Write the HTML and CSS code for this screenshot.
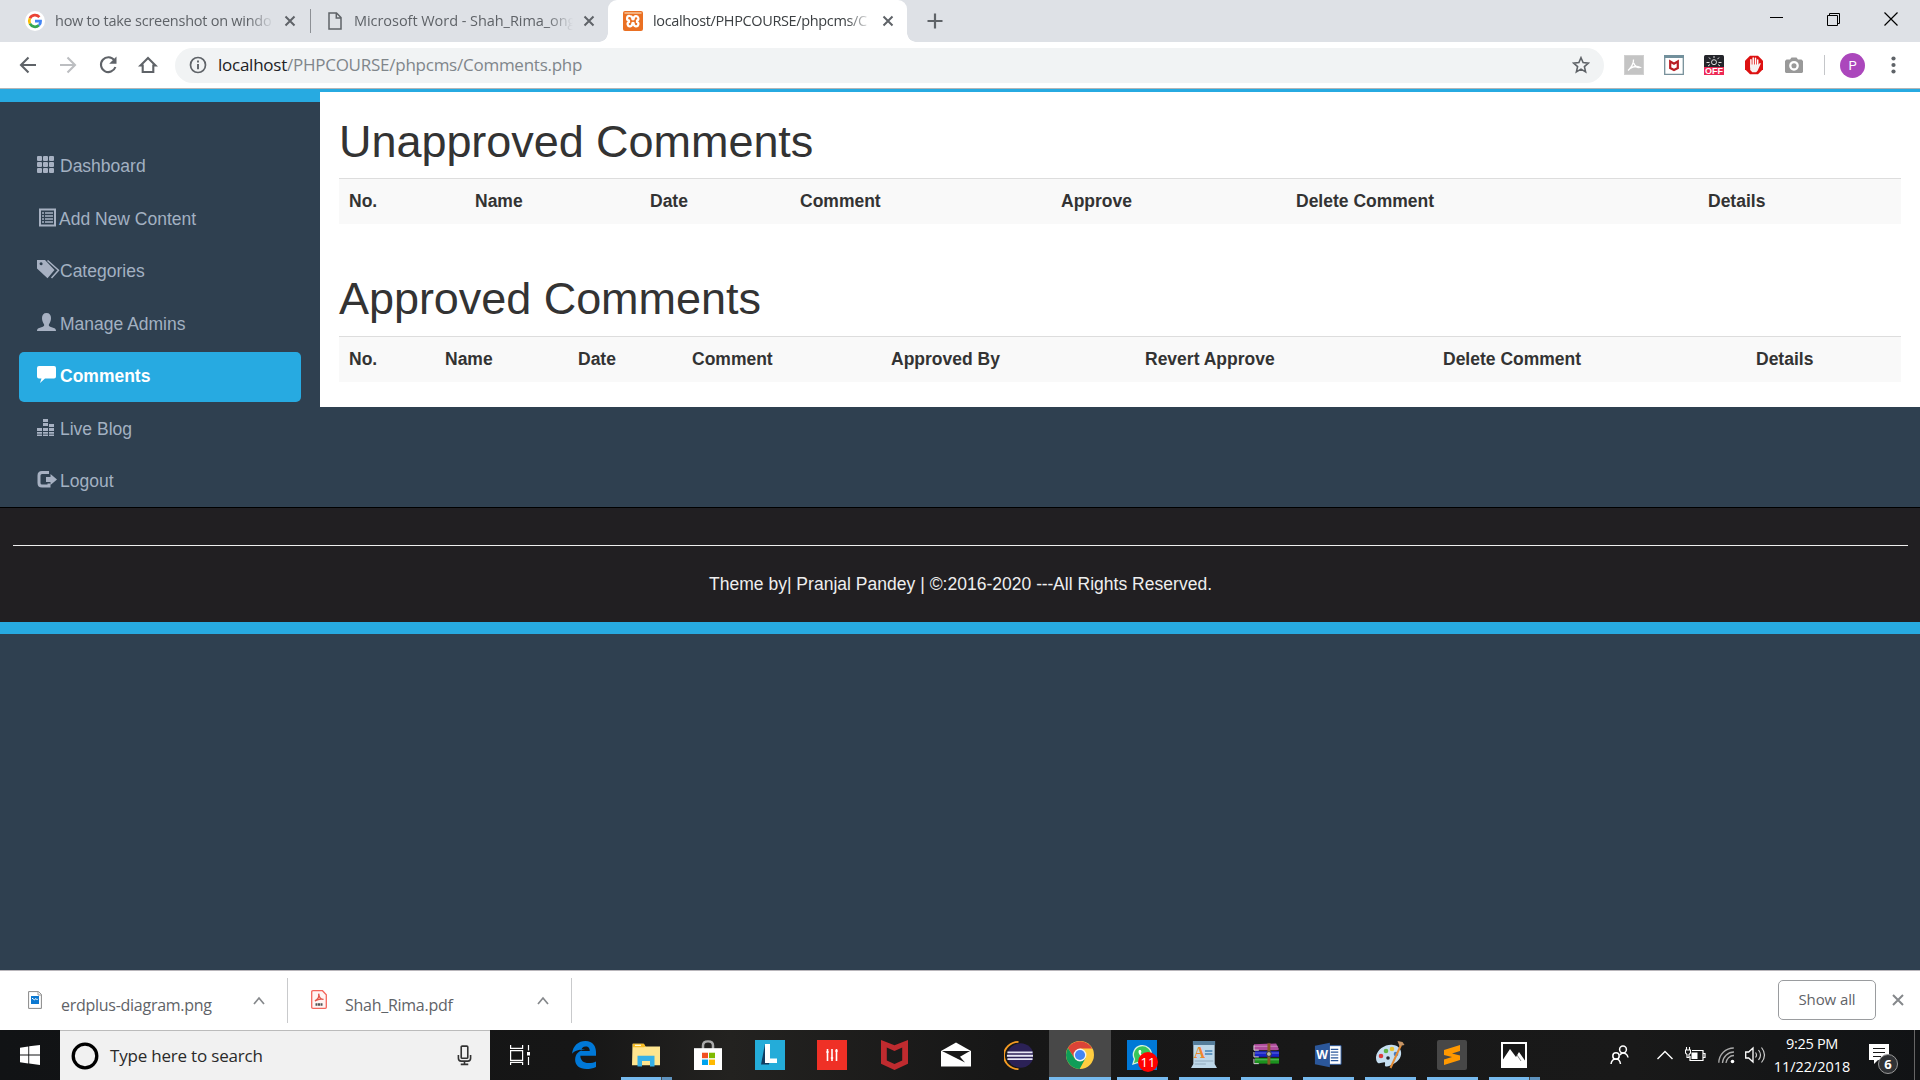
FILE: index.html
```html
<!DOCTYPE html>
<html lang="en">
<head>
<meta charset="utf-8">
<title>Comments</title>
<link rel="stylesheet" href="styles.css">
</head>
<body>
<div class="screen">
  <header class="tabstrip">
    <div class="tab tab-first">
      <svg class="favicon" width="20" height="20" viewBox="0 0 20 20"><circle cx="10" cy="10" r="10" fill="#fff"/><g fill="none" stroke-width="2.7"><path d="M14.4 6.1A5.8 5.8 0 0 0 4.9 7.3" stroke="#ea4335"/><path d="M4.9 7.3a5.8 5.8 0 0 0 0 5.4" stroke="#fbbc05"/><path d="M4.9 12.7a5.8 5.8 0 0 0 9 1.6" stroke="#34a853"/><path d="M13.9 14.3c1.3-1.1 1.8-2.6 1.7-4.1H10" stroke="#4285f4"/></g></svg>
      <span class="tab-title t1">how to take screenshot on windo</span>
      <svg class="tab-close" width="12" height="12" viewBox="0 0 12 12"><path d="M1.5 1.5l9 9m0-9l-9 9" stroke="#5f6368" stroke-width="2"/></svg>
    </div>
    <div class="tab tab-second">
      <svg class="favicon" width="14" height="18" viewBox="0 0 14 18"><path d="M1 1h7.500L13 5.500V17H1zM8.300 1v5H13" fill="none" stroke="#5f6368" stroke-width="1.500"/></svg>
      <span class="tab-title t2">Microsoft Word - Shah_Rima_ong</span>
      <svg class="tab-close" width="12" height="12" viewBox="0 0 12 12"><path d="M1.5 1.5l9 9m0-9l-9 9" stroke="#5f6368" stroke-width="2"/></svg>
    </div>
    <div class="tab tab-active">
      <svg class="favicon" width="20" height="20" viewBox="0 0 20 20"><rect width="20" height="20" rx="2" fill="#ea7023"/><rect x="1.500" y="1" width="17" height="2" fill="#f5b07c"/><path d="M6.800 5a2.300 2.300 0 0 1 2.400 2.300c0 1 .5 1.200.8 1.200s.8-.2.8-1.200A2.300 2.300 0 1 1 14 9.600v1.300a2.300 2.300 0 1 1-3.200 2.100c0-1-.5-1.200-.8-1.200s-.8.2-.8 1.200A2.300 2.300 0 1 1 6 10.900V9.600A2.300 2.300 0 0 1 6.800 5z" fill="none" stroke="#fff" stroke-width="2.200"/></svg>
      <span class="tab-title t3">localhost/PHPCOURSE/phpcms/C</span>
      <svg class="tab-close" width="12" height="12" viewBox="0 0 12 12"><path d="M1.5 1.5l9 9m0-9l-9 9" stroke="#5f6368" stroke-width="2"/></svg>
    </div>
    <svg class="new-tab" width="16" height="16" viewBox="0 0 16 16"><path d="M8 .5v15M.5 8h15" stroke="#5f6368" stroke-width="2.200"/></svg>
    <div class="window-buttons">
      <svg width="14" height="14" viewBox="0 0 14 14"><path d="M0 5.500h13" stroke="#000"/></svg>
      <svg width="14" height="14" viewBox="0 0 14 14"><path d="M.5 3.500h10v10H.5zM2.500 3.500v-2h10v10h-2" fill="none" stroke="#000"/></svg>
      <svg width="14" height="14" viewBox="0 0 14 14"><path d="M.5.5l13 13m0-13l-13 13" stroke="#000" stroke-width="1.200"/></svg>
    </div>
  </header>

  <div class="toolbar">
    <div class="nav-buttons">
      <svg width="20" height="20" viewBox="0 0 20 20"><path d="M18 10H3M10.500 2.500L3 10l7.500 7.500" fill="none" stroke="#5f6368" stroke-width="2.100"/></svg>
      <svg width="20" height="20" viewBox="0 0 20 20"><path d="M2 10h15M9.500 2.500L17 10l-7.500 7.500" fill="none" stroke="#bcbec1" stroke-width="2.100"/></svg>
      <svg width="20" height="20" viewBox="0 0 20 20"><path d="M16.300 5.200A7.400 7.400 0 1 0 17.400 12" fill="none" stroke="#5f6368" stroke-width="2.100"/><path d="M18.500 1.500v7.300h-7.300z" fill="#5f6368"/></svg>
      <svg width="20" height="20" viewBox="0 0 20 20"><path d="M2.500 10.500L10 3l7.500 7.500h-2.200V17H4.700v-6.500z" fill="none" stroke="#5f6368" stroke-width="2.100"/></svg>
    </div>
    <div class="omnibox">
      <svg class="info" width="18" height="18" viewBox="0 0 18 18"><circle cx="9" cy="9" r="7.500" fill="none" stroke="#5f6368" stroke-width="1.700"/><path d="M9 4.500v2M9 8v5.200" stroke="#5f6368" stroke-width="1.900"/></svg>
      <span class="url"><b>localhost</b>/PHPCOURSE/phpcms/Comments.php</span>
      <svg class="star" width="18" height="18" viewBox="0 0 18 18"><path d="M9 1.700l2.100 4.900 5.300.5-4 3.500 1.200 5.300L9 13.100l-4.600 2.800 1.200-5.300-4-3.500 5.300-.5z" fill="none" stroke="#5f6368" stroke-width="1.600"/></svg>
    </div>
    <div class="extensions">
      <svg width="20" height="20" viewBox="0 0 20 20"><path d="M0 0h20v20H0z" fill="#d0d0d0"/><path d="M1 1h18v18H1z" fill="#c4c4c4"/><path d="M4 15.500C7 13 10 8 9.500 4.500M9.700 8c1.300 3.500 3.400 5 6.300 4.400-3-1.500-7.500-.5-10.500 1.200" fill="none" stroke="#fff" stroke-width="1.300"/></svg>
      <svg width="20" height="20" viewBox="0 0 20 20"><path d="M.7.7h18.600v18.600H.7z" fill="#fff" stroke="#77909a" stroke-width="1.300"/><path d="M0 0h20v3H0z" fill="#72909c"/><path d="M6.200 6.500v6.500l3.800 2 3.800-2V6.500L10 8.700z" fill="none" stroke="#b91d24" stroke-width="2.200"/></svg>
      <svg width="20" height="20" viewBox="0 0 20 20"><rect width="20" height="20" rx="1.500" fill="#24252b"/><path d="M0 12h20v8H0z" fill="#ed2855"/><circle cx="10" cy="7.200" r="2.500" fill="none" stroke="#ddd"/><path d="M10 1v2M5 2.500l1.500 1.700M15 2.500l-1.500 1.700M2.500 7.500h3M14.500 7.500h3M4 11l2-1.500M16 11l-2-1.500" stroke="#ddd"/><text x="10" y="19" text-anchor="middle" class="off">OFF</text></svg>
      <svg width="20" height="20" viewBox="0 0 20 20"><path d="M6 .7h8l5 5v8.600l-5 5H6l-5-5V5.700z" fill="#dd1111"/><path d="M6.900 12V4.700M9.200 10V3M11.500 10V3.300M13.700 12V5" stroke="#fff" stroke-width="1.500" stroke-linecap="round"/><path d="M6.200 9.500h8.200l1.500-1.500c.8 0 1 .6.600 1.300l-2.900 6.500-1.500 1.500H8.300l-2.100-2.300z" fill="#f7f1f1"/></svg>
      <svg width="20" height="20" viewBox="0 0 20 20"><path d="M2.500 4.500H6l1.500-2h5l1.500 2h3.500L19 6v11l-1 1H2l-1-1V6z" fill="#999"/><circle cx="10" cy="10.800" r="3.700" fill="none" stroke="#fff" stroke-width="2.300"/></svg>
    </div>
    <span class="divider"></span>
    <span class="avatar">P</span>
    <svg class="kebab" width="5" height="18" viewBox="0 0 5 18"><g fill="#5f6368"><circle cx="2.500" cy="2.500" r="2.100"/><circle cx="2.500" cy="9" r="2.100"/><circle cx="2.500" cy="15.500" r="2.100"/></g></svg>
  </div>

  <div class="page">
    <div class="columns">
      <nav class="sidebar">
        <ul class="side-menu">
          <li><a href="#"><svg width="23" height="20" viewBox="0 0 23 20"><g fill="#a7b1c2"><rect y="1" width="5" height="5" rx="1"/><rect x="6" y="1" width="5" height="5" rx="1"/><rect x="12" y="1" width="5" height="5" rx="1"/><rect y="7" width="5" height="5" rx="1"/><rect x="6" y="7" width="5" height="5" rx="1"/><rect x="12" y="7" width="5" height="5" rx="1"/><rect y="13" width="5" height="5" rx="1"/><rect x="6" y="13" width="5" height="5" rx="1"/><rect x="12" y="13" width="5" height="5" rx="1"/></g></svg>Dashboard</a></li>
          <li><a href="#"><svg width="22" height="20" viewBox="0 0 22 20"><path d="M3 1.500h15v16H3z" fill="none" stroke="#a7b1c2" stroke-width="2"/><path d="M8 5h8M8 8h8M8 11h8M8 14h8" stroke="#a7b1c2" stroke-width="1.700"/><path d="M5 5h2M5 8h2M5 11h2M5 14h2" stroke="#a7b1c2" stroke-width="1.500"/></svg>Add New Content</a></li>
          <li><a href="#"><svg width="23" height="20" viewBox="0 0 23 20"><path d="M0 0h8l9.500 10-7 8.300L0 8.500zM4 2.200a1.500 1.500 0 1 0 .1 3 1.500 1.500 0 0 0 0-3z" fill="#a7b1c2" fill-rule="evenodd"/><path d="M10.500.5L21.500 10.300l-7 7.700" fill="none" stroke="#a7b1c2" stroke-width="1.500"/></svg>Categories</a></li>
          <li><a href="#"><svg width="23" height="20" viewBox="0 0 23 20"><path d="M9.500 0C6.500 0 5 2 5 5s1 4.500 2 6.200c.5 1.300 0 2-1.200 2.500L1.500 15.200C.3 15.800 0 16.700 0 18h19c0-1.300-.3-2.200-1.500-2.800l-4.300-1.500c-1.200-.5-1.700-1.200-1.200-2.500C13 9.500 14 8 14 5s-1.500-5-4.500-5z" fill="#a7b1c2"/></svg>Manage Admins</a></li>
          <li class="active"><a href="#"><svg width="23" height="20" viewBox="0 0 23 20"><path d="M2 1h15q2 0 2 2v8.500q0 2-2 2H8L3 18l1.500-4.500H2q-2 0-2-2V3q0-2 2-2z" fill="#fff"/></svg>Comments</a></li>
          <li><a href="#"><svg width="23" height="20" viewBox="0 0 23 20"><path d="M0 10h5v3H0zM0 14h5v1.700H0zM0 16.500h5V18H0zM6 1h5v3H6zM6 5h5v3H6zM6 10h5v3H6zM6 14h5v1.700H6zM6 16.500h5V18H6zM12 6h5v3h-5zM12 10h5v3h-5zM12 14h5v1.700h-5zM12 16.500h5V18h-5z" fill="#a7b1c2"/></svg>Live Blog</a></li>
          <li><a href="#"><svg width="23" height="20" viewBox="0 0 23 20"><path d="M12 2.500H5Q2 2.500 2 5.500v7.500Q2 16 5 16h7v-2.500" fill="none" stroke="#a7b1c2" stroke-width="3"/><path d="M9 7h4.500V4L20 9.500 13.500 15v-3H9z" fill="#a7b1c2"/></svg>Logout</a></li>
        </ul>
      </nav>
      <main class="content">
        <h1>Unapproved Comments</h1>
        <table class="unapproved">
          <colgroup><col class="w126"><col class="w175"><col class="w150"><col class="w261"><col class="w235"><col class="w412"><col></colgroup>
          <tr><th>No.</th><th>Name</th><th>Date</th><th>Comment</th><th>Approve</th><th>Delete Comment</th><th>Details</th></tr>
        </table>
        <h1 class="second-heading">Approved Comments</h1>
        <table>
          <colgroup><col class="w96"><col class="w133"><col class="w114"><col class="w199"><col class="w254"><col class="w298"><col class="w313"><col></colgroup>
          <tr><th>No.</th><th>Name</th><th>Date</th><th>Comment</th><th>Approved By</th><th>Revert Approve</th><th>Delete Comment</th><th>Details</th></tr>
        </table>
      </main>
    </div>
    <footer class="footer"><hr><p>Theme by| Pranjal Pandey | ©:2016-2020 <span class="dashes">---</span>All Rights Reserved.</p></footer>
    <div class="footer-line"></div>
  </div>

  <div class="downloads">
    <div class="download first">
      <svg class="file" width="14" height="18" viewBox="0 0 14 18"><path d="M.6.6h9.900l2.900 2.900v13.900H.6z" fill="#fff" stroke="#888"/><path d="M10 .6V4h3.400" fill="none" stroke="#999"/><path d="M3 5h8v8H3z" fill="#0b78d1"/><path d="M4 7.500h1l1.300 1.500L8 7.500l1 1.300.8-1" fill="none" stroke="#fff"/></svg>
      <span class="file-name f1">erdplus-diagram.png</span>
      <svg class="caret" width="12" height="9" viewBox="0 0 12 9"><path d="M1 8l5-6 5 6" fill="none" stroke="#85888b" stroke-width="1.700"/></svg>
    </div>
    <div class="download second">
      <svg class="file" width="16" height="19" viewBox="0 0 16 19"><path d="M2 .7h9.500l3.800 4v12.600q0 1-1 1H2q-1.300 0-1.300-1V2Q.7.700 2 .7z" fill="#fff5f4" stroke="#f4665c" stroke-width="1.300"/><path d="M4 11c3-1.500 4.200-4.500 3.700-7.300.3 3.500 2 5.600 4.800 5.700-3-.7-6 .1-8.500 1.600z" fill="none" stroke="#e2574c" stroke-width="1.400"/><path d="M4.500 14.500h7" stroke="#555" stroke-width="2.500" stroke-dasharray="2 .5"/></svg>
      <span class="file-name f2">Shah_Rima.pdf</span>
      <svg class="caret" width="12" height="9" viewBox="0 0 12 9"><path d="M1 8l5-6 5 6" fill="none" stroke="#85888b" stroke-width="1.700"/></svg>
    </div>
    <button class="show-all">Show all</button>
    <svg class="dl-close" width="12" height="12" viewBox="0 0 12 12"><path d="M1 1l10 10M11 1L1 11" stroke="#85888b" stroke-width="2"/></svg>
  </div>

  <div class="taskbar">
    <div class="start"><svg width="20" height="20" viewBox="0 0 20 20"><path d="M0 2.700L8.300 1.500v8H0zM9.200 1.300L20 0v9.500H9.200zM0 10.400h8.300v8L0 17.200zM9.200 10.400H20V20L9.200 18.600z" fill="#fff"/></svg></div>
    <div class="search">
      <svg class="cortana" width="28" height="28" viewBox="0 0 28 28"><circle cx="14" cy="14" r="11.800" fill="none" stroke="#000" stroke-width="3.300"/></svg>
      <span class="search-text">Type here to search</span>
      <svg class="mic" width="15" height="21" viewBox="0 0 16 22"><rect x="4.500" y="1" width="7" height="13" rx="1" fill="none" stroke="#333" stroke-width="1.700"/><path d="M1.500 10.500V14q0 3 3 3h7q3 0 3-3v-3.500M8 17v3M4 20.500h8" fill="none" stroke="#333" stroke-width="1.700"/></svg>
    </div>
    <div class="task-view"><svg width="20" height="20" viewBox="0 0 20 20"><path d="M.6 0v3.400h12V0M.6 5.600h12v9.800H.6zM.6 20v-2.600h12V20M18.500 0v5.500M18.500 12v8" fill="none" stroke="#fff" stroke-width="1.200"/><path d="M17 7h3v3.500h-3z" fill="#fff"/></svg></div>
    <div class="apps">
      <div class="app"><svg width="24" height="28" viewBox="2 1 23 30.500" preserveAspectRatio="none"><path d="M2 15C3 6 8 1 15 1c7 0 10 6 10 12v4H10c0 5 3 8 8 8 3 0 5-.7 7-1.700v6C22 31 19 31.500 16 31.500c-7 0-11-4-11-10C5 15 9 11 14.500 10 10 10 5 11 2 15zm8.500-3H19c0-3-1-5-4-5-2.500 0-4 2-4.500 5z" fill="#0078d7"/></svg></div>
      <div class="app running stacked"><svg width="28" height="24" viewBox="0 0 28 28" preserveAspectRatio="none"><path d="M.5 1h11l2 3H28v22H0z" fill="#ffe58f"/><path d="M1 1h11l1.500 3L12 5H1z" fill="#f7bd25"/><path d="M3 2h6v1.500H3z" fill="#fff7d4"/><path d="M5.500 15h17v12.500H18V21h-8v6.500H5.500z" fill="#37b1e8"/></svg></div>
      <div class="app"><svg width="30" height="30" viewBox="0 0 30 33" preserveAspectRatio="none"><path d="M10 10V6q0-4.500 5-4.500T20 6v4" fill="none" stroke="#aaa" stroke-width="2.500"/><path d="M1 9h28v24H1z" fill="#fff"/><path d="M9 14h6v6H9z" fill="#f25022"/><path d="M16 14h6v6h-6z" fill="#7fba00"/><path d="M9 21.500h6v6H9z" fill="#00a4ef"/><path d="M16 21.500h6v6h-6z" fill="#ffb900"/></svg></div>
      <div class="app"><svg width="30" height="30" viewBox="0 0 30 30"><path d="M0 0h30v30H0z" fill="#24acd9"/><path d="M10 4L6 24.500h8l1-6z" fill="#113c61"/><path d="M10 4h5v14.500h7V23H10z" fill="#fff"/></svg></div>
      <div class="app"><svg width="30" height="30" viewBox="0 0 30 30"><path d="M0 0h30v30H0z" fill="#ef3026"/><path d="M10.500 9v12M15 9v12M19.500 9v12" stroke="#fff" stroke-width="1.600"/><path d="M9.300 12h2.400M13.800 18h2.400M18.300 11h2.400" stroke="#fff" stroke-width="1.400"/></svg></div>
      <div class="app"><svg width="27" height="30" viewBox="0 0 28 34" preserveAspectRatio="none"><path d="M0 0l14 6L28 0v27l-14 7L0 27zM6 8.500v14.800l8 4 8-4V8.500l-8 4z" fill="#bf2b2f" fill-rule="evenodd"/></svg></div>
      <div class="app"><svg class="mail" width="30" height="25" viewBox="0 0 30 28" preserveAspectRatio="none"><path d="M0 10L15 .5 30 10v17.500H0z" fill="#fff"/><path d="M1 10h28L19 16.500l5 6.500-9-5z" fill="#181818"/></svg></div>
      <div class="app"><svg width="29" height="29" viewBox="0 0 30 32" preserveAspectRatio="none"><path d="M15 1A15 15 0 0 0 15 31" fill="none" stroke="#f59b23" stroke-width="2"/><circle cx="17" cy="16" r="13.500" fill="#2b2156"/><path d="M3.500 12.500h26M3 16.300h27M3.500 20h26" stroke="#e8e8f5" stroke-width="2"/></svg></div>
      <div class="app running current"><svg width="28" height="28" viewBox="0 0 32 32"><circle cx="16" cy="16" r="16" fill="#ffcd40"/><path d="M2.150 8A16 16 0 0 1 29.850 8.700H16L9.700 19.600z" fill="#db4437"/><path d="M2.150 8A16 16 0 0 0 15.600 32l6.700-12.300L9.700 19.600z" fill="#0f9d58"/><circle cx="16" cy="16" r="7.300" fill="#f3f3f3"/><circle cx="16" cy="16" r="5.800" fill="#4285f4"/></svg></div>
      <div class="app running"><svg width="30" height="30" viewBox="0 0 30 30"><path d="M0 0h30v30H0z" fill="#0078d7"/><path d="M6 24l1.500-5A9 9 0 1 1 11 22.500z" fill="#39c65b" stroke="#d7f3dd" stroke-width="1.300"/><path d="M12 10c-2 3 2.500 8.500 6.500 8l1-2-2.500-1.500-1 1c-1-.5-2-1.500-2.300-2.500l.8-1-.8-2z" fill="#fff"/></svg><span class="count">11</span></div>
      <div class="app running"><svg width="26" height="28" viewBox="0 0 28 28" preserveAspectRatio="none"><path d="M2.500 0h23v23L28 27H0l2.500-4z" fill="#bed8e9"/><path d="M2 0h24v4H2z" fill="#557d9b"/><path d="M15 10h8M15 13h8" stroke="#4682b4" stroke-width="1.500"/><path d="M4 20h20M4 23h12" stroke="#91a9bd"/><text x="3" y="17" class="wordpad">A</text></svg></div>
      <div class="app running"><svg class="raised" width="27" height="22" viewBox="0 0 28 22"><path d="M1 1l23-1 3 6-3 2H1z" fill="#af4b9c"/><path d="M2 8h25v6H2z" fill="#1723c8"/><path d="M2 15h25v6H2z" fill="#1c911e"/><path d="M1 3h25M2 10h25M2 17h25" stroke="#fff" stroke-opacity=".35"/><path d="M1 7.500h26M1 14.500h26" stroke="#222"/><path d="M1 2v5h5M1 9v5h5M1 16v5h5" fill="none" stroke="#ddd"/><path d="M15 0h3v22h-3z" fill="#885b25"/><circle cx="16.500" cy="11" r="2.500" fill="#bba" stroke="#333"/></svg></div>
      <div class="app running"><svg width="28" height="28" viewBox="0 0 30 28"><path d="M16 4h13v20H16z" fill="#fff" stroke="#2b579a"/><path d="M18 8h8M18 11h8M18 14h8M18 17h8M18 20h8" stroke="#2b579a" stroke-width="1.300"/><path d="M1 4L17 1v26L1 24z" fill="#2b579a"/><text x="2.500" y="18.500" class="word">W</text></svg></div>
      <div class="app running"><svg width="30" height="30" viewBox="0 0 30 30"><path d="M1 17C2 9 11 4 18 5c10 1 11 13 2 18-6 4-11 5-10 1 1-4-4 0-7-1-1.500-1-2-3-2-6z" fill="#c5def0"/><circle cx="11" cy="11" r="2.300" fill="#62b546"/><circle cx="17" cy="9" r="2.300" fill="#e8c435"/><circle cx="6" cy="16" r="2.300" fill="#db3c3a"/><circle cx="21" cy="14" r="2.300" fill="#467cc0"/><circle cx="13" cy="18" r="1.800" fill="#25272a"/><path d="M26 5L15.500 28" stroke="#e28b36" stroke-width="2"/><path d="M22.500 1l5 1 2 3-5 1z" fill="#c69566"/></svg></div>
      <div class="app running"><svg width="30" height="30" viewBox="0 0 30 30"><rect width="30" height="30" rx="2" fill="#474747"/><path d="M7 10l16-5v6l-8 2.500 8 2V20L7 25v-5.500l8-2.500-8-2z" fill="#ff9800"/></svg></div>
      <div class="app running stacked"><svg width="26" height="26" viewBox="0 0 26 26"><path d="M1 1h24v24H1z" fill="#181818" stroke="#fff" stroke-width="2"/><path d="M1 19L9 7l6 8 3-5 7 10v5H1z" fill="#fff"/><path d="M16 13l4 6" stroke="#888"/></svg></div>
    </div>
    <div class="tray">
      <svg class="people" width="20" height="20" viewBox="0 0 20 20"><g fill="none" stroke="#fff" stroke-width="1.500"><circle cx="13" cy="4.500" r="3.400"/><circle cx="6" cy="11" r="3.200"/><path d="M10 10c1-1.700 1.700-2 3-2s4.500 1 5 4.500M1 19c.5-3.500 3-5 5-5s4 1.500 4.500 5"/></g></svg>
      <svg class="up" width="16" height="10" viewBox="0 0 16 10"><path d="M.5 9L8 1.500 15.500 9" fill="none" stroke="#fff" stroke-width="1.400"/></svg>
      <svg class="battery" width="21" height="16" viewBox="0 0 21 16"><path d="M7 3.500h11v10H5V9M18.500 6.500h1.500v4h-1.500" fill="none" stroke="#fff" stroke-width="1.200"/><path d="M6.500 5.500h6v6.500h-6z" fill="#fff"/><path d="M1.500 0v3M4.500 0v3M.5 3h5v3L4 7.500v3H2v-3L.5 6z" fill="none" stroke="#fff" stroke-width="1.100"/></svg>
      <svg class="wifi" width="17" height="17" viewBox="0 0 17 17"><g fill="none" stroke="#aaa" stroke-width="1.300"><path d="M.8 15.800A15 15 0 0 1 15.800 1M4.500 16A11.500 11.500 0 0 1 16 5M8 16a8 8 0 0 1 8-7.500"/></g><circle cx="14.500" cy="14.500" r="1.800" fill="#fff"/></svg>
      <svg class="volume" width="21" height="18" viewBox="0 0 21 18"><path d="M.7 6h3L8 2v14l-4.300-4h-3z" fill="none" stroke="#fff" stroke-width="1.300"/><path d="M10.500 6.500q2 2.500 0 5M13.500 4q4 5 0 10M16.500 1.500q6 7.500 0 15" fill="none" stroke="#ccc" stroke-width="1.200"/></svg>
      <div class="clock"><span>9:25 PM</span><span class="date">11/22/2018</span></div>
      <div class="notifications"><svg width="20" height="20" viewBox="0 0 20 20"><path d="M0 0h20v16H9l-4 4v-4H0z" fill="#fff"/><path d="M4 4.500h12M4 8.500h12M4 12.500h8" stroke="#181818" stroke-width="1.100"/></svg><span class="badge">6</span></div>
      <span class="desktop-edge"></span>
    </div>
  </div>
</div>
</body>
</html>
```
FILE: styles.css
```css
* { box-sizing: border-box; }
body { margin: 0; }
svg { display: block; flex: none; }
.screen { width: 1920px; height: 1080px; overflow: hidden; display: flex; flex-direction: column; font-family: "Open Sans", "Noto Sans", sans-serif; }

/* Tab strip */
.tabstrip { height: 42px; flex: none; background: #dee1e6; display: flex; align-items: center; }
.tab { height: 42px; display: flex; align-items: center; color: #5f6368; font-size: 14.5px; }
.tab-first { width: 311px; padding-left: 25px; background: linear-gradient(#8d9095, #8d9095) right center / 1px 24px no-repeat; }
.tab-second { width: 297px; padding-left: 17px; }
.tab-active { width: 299px; padding-left: 15px; background: #fff; border-radius: 9px 9px 0 0; color: #3c4043; position: relative; }
.tab-active::before, .tab-active::after { content: ""; position: absolute; bottom: 0; width: 9px; height: 9px; }
.tab-active::before { left: -9px; background: radial-gradient(circle at 0 0, transparent 8.500px, #fff 9px); }
.tab-active::after { right: -9px; background: radial-gradient(circle at 100% 0, transparent 8.500px, #fff 9px); }
.tab-title { white-space: nowrap; width: 219px; line-height: 24px; padding-bottom: 1px; -webkit-mask-image: linear-gradient(90deg, #000 88%, transparent); mask-image: linear-gradient(90deg, #000 88%, transparent); }
.t1 { margin-left: 10px; letter-spacing: -.25px; }
.t2 { margin-left: 12px; letter-spacing: -.05px; }
.t3 { margin-left: 10px; letter-spacing: -.36px; }
.tab-close { margin-left: 10px; }
.new-tab { margin-left: 20px; }
.window-buttons { margin: 0 22px 5px auto; display: flex; gap: 43px; }

/* Toolbar */
.toolbar { height: 47px; flex: none; background: #fff; border-bottom: 1px solid #b3b5b6; display: flex; align-items: center; }
.nav-buttons { display: flex; gap: 20px; padding-left: 18px; width: 175px; }
.omnibox { width: 1429px; height: 35px; border-radius: 18px; background: #f1f3f4; display: flex; align-items: center; padding: 0 14px; }
.url { margin-left: 11px; font-size: 17px; letter-spacing: -.25px; color: #80868b; padding-bottom: 1px; }
.url b { font-weight: 400; color: #202124; }
.star { margin-left: auto; }
.extensions { display: flex; gap: 20px; margin-left: 20px; }
.off { font: bold 9px "Liberation Sans", sans-serif; fill: #fff; }
.divider { width: 1px; height: 20px; background: #c4c6c9; margin-left: 20px; }
.avatar { width: 25px; height: 25px; border-radius: 50%; background: #ab47bc; color: #fff; font: 13px/25px Roboto, sans-serif; text-align: center; margin-left: 15px; }
.kebab { margin-left: 26px; }

/* Page */
.page { height: 881px; flex: none; background: #2f4050; font: 17.5px/25px "Liberation Sans", Arial, sans-serif; }
.columns { display: flex; align-items: flex-start; height: 418px; border-top: 3px solid #27aae1; }
.sidebar { width: 320px; border-top: 10px solid #27aae1; padding: 40px 19px 0; }
.side-menu { list-style: none; margin: 0; padding: 0; display: flex; flex-direction: column; gap: 2.5px; }
.side-menu a { display: flex; height: 50px; padding: 12px 18px 13px; color: #a3b1c2; text-decoration: none; border-radius: 5px; }
.side-menu svg { margin-top: 1px; }
.side-menu .active a { background: #27aae1; color: #fff; font-weight: bold; }
.content { flex: 1; height: 315px; padding: 25px 19px 0; background: #fff; color: #333; }
h1 { margin: 0; font-size: 45px; font-weight: 400; line-height: 49px; letter-spacing: -.05px; height: 61px; }
.second-heading { height: 62px; }
table { width: 1562px; table-layout: fixed; border-collapse: separate; border-spacing: 0; }
th { border-top: 1px solid #ddd; background: #f9f9f9; padding: 10px; height: 46px; text-align: left; line-height: 25px; }
.unapproved { margin-bottom: 50px; }
.w96 { width: 96px; } .w114 { width: 114px; } .w126 { width: 126px; } .w133 { width: 133px; }
.w150 { width: 150px; } .w175 { width: 175px; } .w199 { width: 199px; } .w235 { width: 235px; }
.w254 { width: 254px; } .w261 { width: 261px; } .w298 { width: 298px; } .w313 { width: 313px; } .w412 { width: 412px; }
.footer { height: 115px; border-top: 1px solid #000; background: #211f22; padding: 37px 12px 0 13px; color: #eee; text-align: center; }
.footer hr { margin: 0; border: 0; height: 1px; background: #eee; }
.footer p { margin: 26px 0 0; letter-spacing: .02px; }
.dashes { letter-spacing: -.2px; }
.footer-line { height: 12px; background: #27aae1; }

/* Downloads shelf */
.downloads { height: 60px; flex: none; background: #fff; border-top: 1px solid #b9b6bb; display: flex; align-items: center; color: #5f6368; }
.download { height: 45px; display: flex; align-items: center; border-right: 1px solid #c9cacc; }
.first { width: 288px; padding-left: 28px; }
.second { width: 284px; padding-left: 23px; }
.file { margin-bottom: 2px; }
.file-name { margin-left: 19px; font-size: 16px; padding-top: 8px; letter-spacing: -.27px; white-space: nowrap; }
.f2 { margin-left: 18px; }
.caret { margin: 0 22px 0 auto; }
.show-all { margin-left: auto; width: 98px; height: 40px; border: 1px solid #9a9c9f; border-radius: 5px; background: #fff; color: #5f6368; font: 15px "Open Sans", sans-serif; letter-spacing: -.1px; padding: 0 0 3px; margin-bottom: 1px; }
.dl-close { margin: 0 16px 1px 16px; }

/* Taskbar */
.taskbar { height: 50px; flex: none; background: linear-gradient(90deg, #111315 0, #161616 30%, #232220 38%, #171717 52%, #191919 85%, #111315); display: flex; }
.start { width: 60px; display: flex; align-items: center; padding-left: 20px; }
.search { width: 430px; background: #f1f1f1; border-top: 1px solid #bbb; display: flex; align-items: center; padding: 0 18px 0 11px; }
.search-text { margin-left: 11px; font-size: 17px; color: #2a2a2a; letter-spacing: -.2px; padding-bottom: 1px; }
.mic { margin-left: auto; }
.task-view { width: 63px; padding-left: 20px; display: flex; align-items: center; }
.apps { display: flex; }
.app { width: 62px; height: 50px; position: relative; display: flex; align-items: center; justify-content: center; }
.mail { margin-bottom: 2px; }
.raised { margin-bottom: 3px; }
.running { background: linear-gradient(#76b9ed, #76b9ed) center bottom / 51px 3px no-repeat; }
.stacked { background: linear-gradient(90deg, #76b9ed 40px, #4b4b4b 40px, #4b4b4b 41px, #5e92bd 41px) center bottom / 51px 3px no-repeat; }
.current { background: linear-gradient(#76b9ed, #76b9ed) center bottom / 62px 3px no-repeat #484848; }
.count { position: absolute; left: 27px; top: 22px; width: 20px; height: 20px; border-radius: 50%; background: #f00; color: #fff; font-size: 13px; line-height: 20px; text-align: center; }
.wordpad { font: bold 17px "Liberation Serif", serif; fill: #f0872c; }
.word { font: bold 13px "Open Sans", sans-serif; fill: #fff; }
.tray { flex: 1; display: flex; align-items: center; padding-left: 65px; }
.up { margin-left: 27px; }
.battery { margin-left: 12px; }
.wifi { margin-left: 12px; }
.volume { margin-left: 10px; }
.clock { width: 92px; display: flex; flex-direction: column; align-items: center; color: #fff; font-size: 14.5px; line-height: 23px; letter-spacing: -.3px; }
.date { letter-spacing: -.05px; }
.notifications { position: relative; margin-left: 11px; margin-bottom: 3px; width: 20px; height: 20px; }
.badge { position: absolute; left: 9px; top: 10px; width: 20px; height: 20px; border: 1px solid #999; border-radius: 50%; background: #303235; color: #fff; font: bold 13px/18px "Open Sans", sans-serif; text-align: center; }
.desktop-edge { width: 1px; height: 50px; background: #666; margin-left: 25px; }
```
